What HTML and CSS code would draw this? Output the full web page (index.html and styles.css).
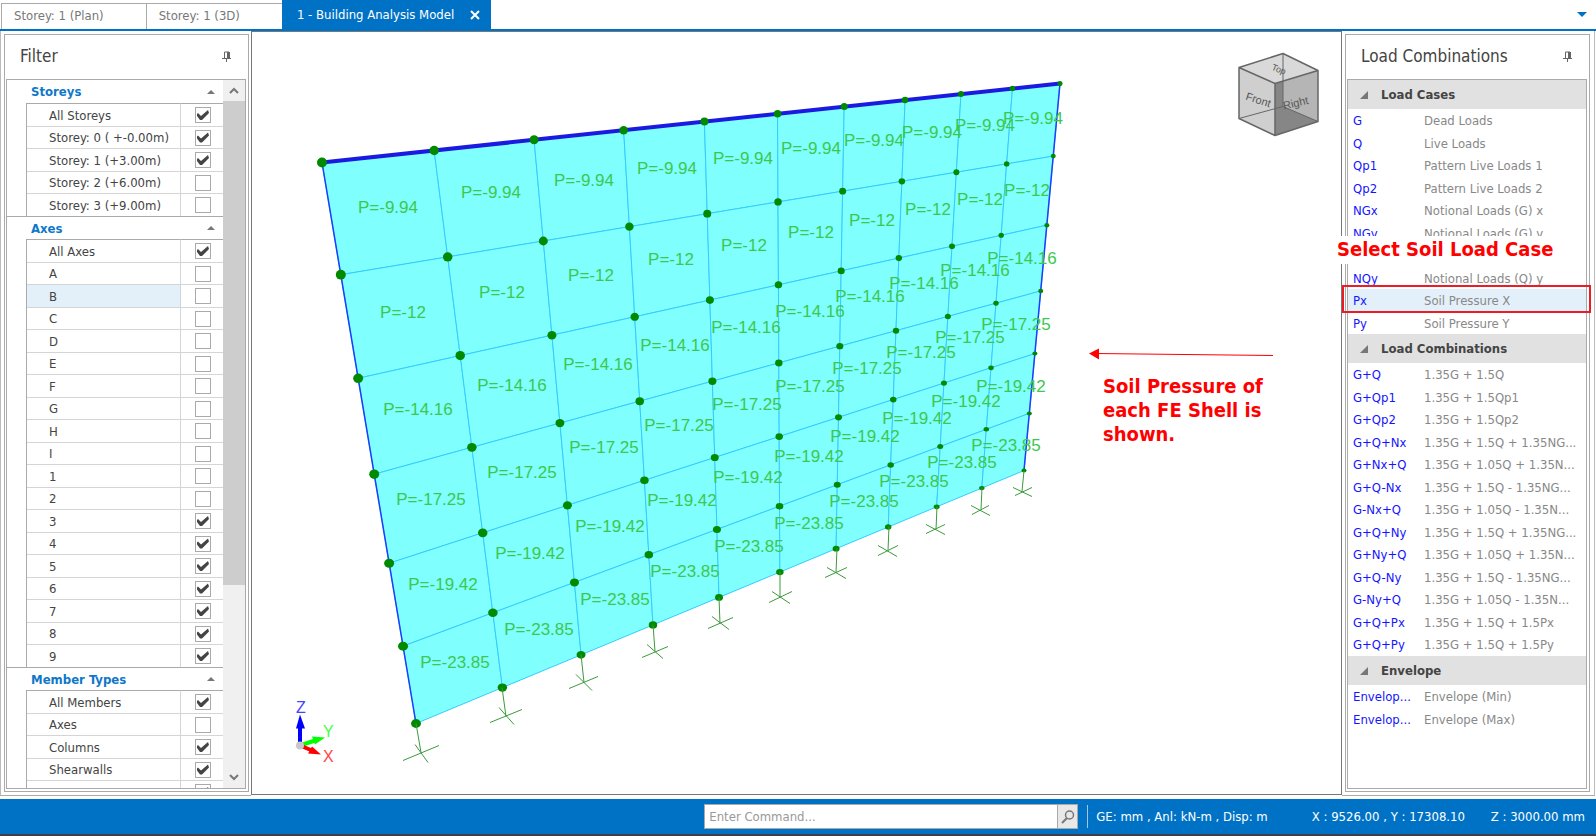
FILE: index.html
```html
<!DOCTYPE html>
<html lang="en">
<head>
    <meta charset="UTF-8">
    <title>Building Analysis Model</title>
    <link rel="stylesheet" href="styles.css">
</head>
<body>

<nav class="tabs">
    <a class="tab" href="#plan">Storey: 1 (Plan)</a>
    <a class="tab" href="#view3d">Storey: 1 (3D)</a>
    <div class="tab active">
        <a href="#model">1 - Building Analysis Model</a>
        <button class="close" aria-label="Close">
            <svg width="10" height="10" viewBox="0 0 10 10"><path d="M1 1L9 9M9 1L1 9" stroke="#fff" stroke-width="2"/></svg>
        </button>
    </div>
    <button class="tablist" aria-label="Open tabs">
        <svg width="10" height="5" viewBox="0 0 10 5"><path d="M0 0H10L5 5Z" fill="#0072c6"/></svg>
    </button>
</nav>

<main class="work">

    <aside class="side">
        <div class="panel">
            <div class="panelhead">
                <h2>Filter</h2>
                <button class="pin" aria-label="Pin">
                    <svg width="10" height="11" viewBox="0 0 10 11"><path d="M2.5 7V1H7V7M0 7.5H9M4.5 8V11" fill="none" stroke="#666"/><path d="M5 1H8V7H5Z" fill="#666"/></svg>
                </button>
            </div>
            <div class="list filter">
                <div class="groups">
                    <button class="group">Storeys</button>
                    <table class="checks">
                        <tr><td><label for="s0">All Storeys</label></td><td><input type="checkbox" id="s0" checked></td></tr>
                        <tr><td><label for="s1">Storey: 0 ( +-0.00m)</label></td><td><input type="checkbox" id="s1" checked></td></tr>
                        <tr><td><label for="s2">Storey: 1 (+3.00m)</label></td><td><input type="checkbox" id="s2" checked></td></tr>
                        <tr><td><label for="s3">Storey: 2 (+6.00m)</label></td><td><input type="checkbox" id="s3"></td></tr>
                        <tr><td><label for="s4">Storey: 3 (+9.00m)</label></td><td><input type="checkbox" id="s4"></td></tr>
                    </table>
                    <button class="group">Axes</button>
                    <table class="checks">
                        <tr><td><label for="a0">All Axes</label></td><td><input type="checkbox" id="a0" checked></td></tr>
                        <tr><td><label for="aA">A</label></td><td><input type="checkbox" id="aA"></td></tr>
                        <tr><td class="current"><label for="aB">B</label></td><td><input type="checkbox" id="aB"></td></tr>
                        <tr><td><label for="aC">C</label></td><td><input type="checkbox" id="aC"></td></tr>
                        <tr><td><label for="aD">D</label></td><td><input type="checkbox" id="aD"></td></tr>
                        <tr><td><label for="aE">E</label></td><td><input type="checkbox" id="aE"></td></tr>
                        <tr><td><label for="aF">F</label></td><td><input type="checkbox" id="aF"></td></tr>
                        <tr><td><label for="aG">G</label></td><td><input type="checkbox" id="aG"></td></tr>
                        <tr><td><label for="aH">H</label></td><td><input type="checkbox" id="aH"></td></tr>
                        <tr><td><label for="aI">I</label></td><td><input type="checkbox" id="aI"></td></tr>
                        <tr><td><label for="a1">1</label></td><td><input type="checkbox" id="a1"></td></tr>
                        <tr><td><label for="a2">2</label></td><td><input type="checkbox" id="a2"></td></tr>
                        <tr><td><label for="a3">3</label></td><td><input type="checkbox" id="a3" checked></td></tr>
                        <tr><td><label for="a4">4</label></td><td><input type="checkbox" id="a4" checked></td></tr>
                        <tr><td><label for="a5">5</label></td><td><input type="checkbox" id="a5" checked></td></tr>
                        <tr><td><label for="a6">6</label></td><td><input type="checkbox" id="a6" checked></td></tr>
                        <tr><td><label for="a7">7</label></td><td><input type="checkbox" id="a7" checked></td></tr>
                        <tr><td><label for="a8">8</label></td><td><input type="checkbox" id="a8" checked></td></tr>
                        <tr><td><label for="a9">9</label></td><td><input type="checkbox" id="a9" checked></td></tr>
                    </table>
                    <button class="group">Member Types</button>
                    <table class="checks">
                        <tr><td><label for="m0">All Members</label></td><td><input type="checkbox" id="m0" checked></td></tr>
                        <tr><td><label for="m1">Axes</label></td><td><input type="checkbox" id="m1"></td></tr>
                        <tr><td><label for="m2">Columns</label></td><td><input type="checkbox" id="m2" checked></td></tr>
                        <tr><td><label for="m3">Shearwalls</label></td><td><input type="checkbox" id="m3" checked></td></tr>
                        <tr><td><label for="m4">Beams</label></td><td><input type="checkbox" id="m4" checked></td></tr>
                    </table>
                </div>
                <div class="scroll">
                    <button aria-label="Scroll up"><svg width="10" height="7" viewBox="0 0 10 7"><path d="M1 6L5 2L9 6" fill="none" stroke="#777" stroke-width="2"/></svg></button>
                    <div class="thumb"></div>
                    <div class="track"></div>
                    <button aria-label="Scroll down"><svg width="10" height="7" viewBox="0 0 10 7"><path d="M1 1L5 5L9 1" fill="none" stroke="#777" stroke-width="2"/></svg></button>
                </div>
            </div>
        </div>
    </aside>

    <section class="view">
        <svg id="model" viewBox="252 33 1089 761">
            <g id="shells"></g>
            <g id="nodes"></g>
            <!-- supports under the wall -->
            <path class="support" d="M416 724L421 753M403 761L439 746M415 745L428 763
                M502 688L506 717M490 723L522 710M499 708L514 725
                M581 655L584 683M569 689L598 677M576 675L592 691
                M653 625L655 652M642 658L668 647M647 645L663 659
                M719 598L720 624M708 629L733 618M712 617L729 630
                M780 572V598M769 603L792 592M772 592L790 604
                M837 549L836 573M825 578L847 568M827 568L846 579
                M889 527L888 551M878 556L898 546M878 546L897 557
                M937 507L936 530M926 534L945 525M926 525L945 535
                M982 488L981 510M972 515L989 506M971 506L990 516
                M1024 471L1022 492M1015 496L1032 488M1013 488L1032 497"/>
            <g id="loads"></g>

            <!-- view cube -->
            <g class="cube">
                <path fill="#d9d9d9" d="M1239 68L1283 54L1318 71L1275 84Z"/>
                <path fill="#cfcfcf" d="M1239 68L1275 84V136L1239 119Z"/>
                <path fill="#b5b5b5" d="M1275 84L1318 71V122L1275 136Z"/>
                <path fill="#868686" d="M1275 84L1283 82V107L1318 122L1275 136Z"/>
                <path class="hidden" d="M1283 54V107L1239 119M1283 107L1318 122"/>
                <path class="edge" d="M1239 68L1283 54L1318 71V122L1275 136L1239 119ZM1239 68L1275 84L1318 71M1275 84V136"/>
                <text transform="translate(1245 100) rotate(18)">Front</text>
                <text transform="translate(1284 110) rotate(-13)">Right</text>
                <text class="top" transform="translate(1271 70) rotate(22)">Top</text>
            </g>

            <!-- axis triad -->
            <g class="triad">
                <path stroke="#0000ff" d="M300 746V727"/><path fill="#0000ff" d="M300 715L296 729H305Z"/>
                <path stroke="#00ff00" d="M300 746L315 741"/><path fill="#00ff00" d="M325 738L312 737L315 745Z"/>
                <path stroke="#ff0000" d="M300 746L312 751"/><path fill="#ff0000" d="M321 755L312 747L308 754Z"/>
                <circle cx="300" cy="746" r="4" fill="#c8c8c8"/>
                <text x="296" y="713" fill="#4444ff">Z</text>
                <text x="323" y="737" fill="#44ff44">Y</text>
                <text x="323" y="762" fill="#ff4444">X</text>
            </g>

            <g class="note">
                <path d="M1096 354L1273 356" stroke="#f00"/>
                <path d="M1089 354L1099 349V360Z"/>
                <text x="1103" y="393">Soil Pressure of</text>
                <text x="1103" y="417">each FE Shell is</text>
                <text x="1103" y="441">shown.</text>
            </g>
        </svg>
    </section>

    <aside class="side right">
        <div class="panel">
            <div class="panelhead">
                <h2>Load Combinations</h2>
                <button class="pin" aria-label="Pin">
                    <svg width="10" height="11" viewBox="0 0 10 11"><path d="M2.5 7V1H7V7M0 7.5H9M4.5 8V11" fill="none" stroke="#666"/><path d="M5 1H8V7H5Z" fill="#666"/></svg>
                </button>
            </div>
            <div class="list">
                <button class="band">Load Cases</button>
                <table class="cases">
                    <tr><td>G</td><td>Dead Loads</td></tr>
                    <tr><td>Q</td><td>Live Loads</td></tr>
                    <tr><td>Qp1</td><td>Pattern Live Loads 1</td></tr>
                    <tr><td>Qp2</td><td>Pattern Live Loads 2</td></tr>
                    <tr><td>NGx</td><td>Notional Loads (G) x</td></tr>
                    <tr><td>NGy</td><td>Notional Loads (G) y</td></tr>
                    <tr><td></td><td></td></tr>
                    <tr><td>NQy</td><td>Notional Loads (Q) y</td></tr>
                    <tr class="current"><td>Px</td><td>Soil Pressure X</td></tr>
                    <tr><td>Py</td><td>Soil Pressure Y</td></tr>
                </table>
                <button class="band">Load Combinations</button>
                <table class="cases">
                    <tr><td>G+Q</td><td>1.35G + 1.5Q</td></tr>
                    <tr><td>G+Qp1</td><td>1.35G + 1.5Qp1</td></tr>
                    <tr><td>G+Qp2</td><td>1.35G + 1.5Qp2</td></tr>
                    <tr><td>G+Q+Nx</td><td>1.35G + 1.5Q + 1.35NG...</td></tr>
                    <tr><td>G+Nx+Q</td><td>1.35G + 1.05Q + 1.35N...</td></tr>
                    <tr><td>G+Q-Nx</td><td>1.35G + 1.5Q - 1.35NG...</td></tr>
                    <tr><td>G-Nx+Q</td><td>1.35G + 1.05Q - 1.35N...</td></tr>
                    <tr><td>G+Q+Ny</td><td>1.35G + 1.5Q + 1.35NG...</td></tr>
                    <tr><td>G+Ny+Q</td><td>1.35G + 1.05Q + 1.35N...</td></tr>
                    <tr><td>G+Q-Ny</td><td>1.35G + 1.5Q - 1.35NG...</td></tr>
                    <tr><td>G-Ny+Q</td><td>1.35G + 1.05Q - 1.35N...</td></tr>
                    <tr><td>G+Q+Px</td><td>1.35G + 1.5Q + 1.5Px</td></tr>
                    <tr><td>G+Q+Py</td><td>1.35G + 1.5Q + 1.5Py</td></tr>
                </table>
                <button class="band">Envelope</button>
                <table class="cases">
                    <tr><td>Envelop...</td><td>Envelope (Min)</td></tr>
                    <tr><td>Envelop...</td><td>Envelope (Max)</td></tr>
                </table>
            </div>
        </div>
        <p class="callout">Select Soil Load Case</p>
        <div class="frame"></div>
    </aside>

</main>

<footer class="status">
    <form class="command">
        <input type="text" aria-label="Command" placeholder="Enter Command...">
        <button type="button" aria-label="Search">
            <svg width="14" height="14" viewBox="0 0 14 14"><circle cx="8.5" cy="5" r="4" fill="none" stroke="#777" stroke-width="1.5"/><path d="M6 8L1 13" stroke="#777" stroke-width="2"/></svg>
        </button>
    </form>
    <span class="units">GE: mm , Anl: kN-m , Disp: m</span>
    <span class="xy">X : 9526.00 , Y : 17308.10</span>
    <span>Z : 3000.00 mm</span>
</footer>

<script src="script.js"></script>
</body>
</html>
```
FILE: styles.css
```css
*{
    box-sizing: border-box;
}

body{
    margin: 0;
    height: 100vh;
    display: flex;
    flex-direction: column;
    background-color: #fff;
    color: #444;
    font-family: "DejaVu Sans Condensed", "DejaVu Sans", sans-serif;
    font-size: 13px;
}

button{
    border: none;
    padding: 0;
    background: none;
    font: inherit;
    color: inherit;
}

a{
    color: inherit;
    text-decoration: none;
}

svg{
    display: block;
}

/* tabs */
.tabs{
    display: flex;
    align-items: flex-end;
    height: 31px;
    flex: none;
    padding-left: 1px;
    border-bottom: 2px solid #0072c6;
}

.tab{
    height: 26px;
    padding: 0 42px 0 12px;
    line-height: 24px;
    border: 1px solid #aaa;
    border-bottom: none;
    color: #777;
}
.tab + .tab{
    border-left: none;
    border-right: none;
}

.tab.active{
    display: flex;
    align-items: center;
    gap: 16px;
    height: 29px;
    padding: 0 11px 0 15px;
    line-height: 29px;
    border: none;
    background-color: #0072c6;
    color: #fff;
}

.tablist{
    margin-left: auto;
    padding: 0 9px 12px 0;
}

/* panels */
.work{
    flex: 1;
    min-height: 0;
    display: flex;
}

.side{
    position: relative;
    width: 251px;
    flex: none;
    padding: 3px 2px 3px 3px;
    border-left: 1px solid #bbb;
    border-bottom: 1px solid #aaa;
}
.side.right{
    width: 253px;
    margin-right: 1px;
    padding: 3px 4px 3px 3px;
    border-left: none;
    border-right: 1px solid #bbb;
}

.panel{
    height: 100%;
    display: flex;
    flex-direction: column;
    padding: 0 2px 2px 1px;
    border: 1px solid #aaa;
}

.panelhead{
    display: flex;
    justify-content: space-between;
    align-items: center;
    height: 44px;
    flex: none;
    padding: 0 14px 2px 14px;
}

h2{
    margin: 0;
    font-size: 17px;
    font-weight: normal;
}

.list{
    flex: 1;
    min-height: 0;
    overflow: hidden;
    border: 1px solid #aaa;
}

table{
    border-collapse: separate;
    border-spacing: 0;
    table-layout: fixed;
}
td{
    padding: 0;
    white-space: nowrap;
    overflow: hidden;
}
tr{
    height: 22px;
}
tr:nth-child(odd){
    height: 23px;
}

.filter{
    display: flex;
}
.groups{
    flex: 1;
    min-width: 0;
}

.group{
    display: flex;
    justify-content: space-between;
    align-items: center;
    width: 100%;
    height: 23px;
    padding: 0 8px 0 24px;
    border-top: 1px solid #aaa;
    color: #0f78c8;
    font-weight: bold;
}
.group:first-child{
    border-top: none;
}
.group::after{
    content: "";
    border: 4px solid transparent;
    border-top: none;
    border-bottom: 4px solid #777;
}

.checks{
    width: calc(100% - 19px);
    margin-left: 19px;
    border-left: 1px solid #aaa;
}
.checks td{
    border-top: 1px solid #d5d5d5;
    padding-left: 22px;
}
.checks tr:first-child td{
    border-top-color: #aaa;
}
.checks td + td{
    width: 43px;
    padding: 0 0 0 14px;
    border-left: 1px solid #d5d5d5;
}
.checks .current{
    background-color: #e3f0fa;
}

input[type="checkbox"]{
    display: block;
    appearance: none;
    width: 16px;
    height: 16px;
    margin: 0;
    border: 1px solid #aaa;
    background-color: #fff;
}
/* tick mark */
input[type="checkbox"]:checked::after{
    content: "";
    display: block;
    width: 12px;
    height: 12px;
    margin: 1px;
    background-color: #444;
    clip-path: polygon(0 5px, 1px 4px, 4px 7px, 11px 1px, 12px 4px, 5px 11px, 3px 11px, 0 7px);
}

.scroll{
    display: flex;
    flex-direction: column;
    width: 22px;
    background-color: #f0f0f0;
}
.scroll button{
    display: flex;
    align-items: center;
    justify-content: center;
    height: 21px;
}
.thumb{
    flex: 484;
    background-color: #cdcdcd;
}
.track{
    flex: 182;
}

.band{
    display: flex;
    align-items: center;
    gap: 13px;
    width: 100%;
    height: 29px;
    padding-left: 12px;
    background-color: #e1e1e1;
    font-weight: bold;
}
.band::before{
    content: "";
    border-left: 8px solid transparent;
    border-bottom: 8px solid #777;
}

.cases{
    width: 100%;
    color: #888;
}
.cases td:first-child{
    width: 76px;
    padding-left: 5px;
    color: #1414ff;
}
.cases .current{
    background-color: #e3f0fa;
}

/* red notes over the load list */
.callout{
    position: absolute;
    top: 205px;
    left: -5px;
    margin: 0;
    padding-bottom: 2px;
    background-color: #fff;
    color: #f00;
    font-size: 20px;
    font-weight: bold;
    line-height: 26px;
    white-space: nowrap;
}
.frame{
    position: absolute;
    top: 254px;
    left: 0;
    right: 3px;
    height: 28px;
    border: 2px solid #ed1c24;
}

/* model view */
.view{
    flex: 1;
    min-width: 0;
    margin-bottom: 1px;
    border: 1px solid #777;
}
#model{
    width: 100%;
    height: 100%;
}
.shell{
    fill: #80ffff;
    stroke: #33ccff;
}
.beam{
    stroke: #1a1ae0;
    stroke-width: 4;
}
.wall{
    stroke: #1a40ff;
    stroke-width: 1.5;
}
#nodes{
    fill: #008a00;
}
#loads{
    fill: #3cc84e;
    font-family: "Liberation Sans", Arial, sans-serif;
    font-size: 17px;
    text-anchor: middle;
}
.support{
    fill: none;
    stroke: #3c9a3c;
}
.cube .edge{
    fill: none;
    stroke: #666;
    stroke-width: 1.5;
    stroke-linejoin: round;
}
.cube .hidden{
    fill: none;
    stroke: #666;
}
.cube text{
    fill: #555;
    font-family: "Liberation Sans", Arial, sans-serif;
    font-size: 11px;
}
.cube .top{
    font-size: 9px;
}
.triad{
    stroke-width: 4;
    font-family: "Liberation Sans", Arial, sans-serif;
    font-size: 16px;
}
.triad text{
    stroke: none;
}
.note{
    fill: #f00;
    font-size: 20px;
    font-weight: bold;
}

/* status bar */
.status{
    display: flex;
    align-items: center;
    justify-content: flex-end;
    flex: none;
    height: 37px;
    margin-top: 3px;
    padding-right: 11px;
    border-bottom: 2px solid #3c4046;
    background-color: #0072c6;
    color: #fff;
}
.command{
    display: flex;
    width: 374px;
    height: 25px;
    border: 1px solid #aaa;
    background-color: #fff;
}
.command input{
    flex: 1;
    min-width: 0;
    padding: 0 4px;
    border: none;
    background: none;
    font: inherit;
}
.command input::placeholder{
    color: #999;
}
.command button{
    display: flex;
    align-items: center;
    justify-content: center;
    width: 20px;
    border-left: 1px solid #aaa;
    background-color: #e8e8e8;
}
.units{
    margin-left: 9px;
    padding-left: 8px;
    border-left: 1px solid #9cc8ea;
    line-height: 23px;
}
.xy{
    min-width: 161px;
    margin: 0 18px 0 44px;
}
```
FILE: script.js
```js
// wall corners on the view: top left, top right, bottom right, bottom left
const corners = [[322, 163], [1060, 84], [1024, 471], [416, 724]];
const pressures = ["-9.94", "-12", "-14.16", "-17.25", "-19.42", "-23.85"];
const cols = 10;
const rows = pressures.length;

// perspective mapping of the unit square onto the corners
const [[x0, y0], [x1, y1], [x2, y2], [x3, y3]] = corners;
const dx1 = x1 - x2, dx2 = x3 - x2, sx = x0 - x1 + x2 - x3;
const dy1 = y1 - y2, dy2 = y3 - y2, sy = y0 - y1 + y2 - y3;
const det = dx1 * dy2 - dx2 * dy1;
const g = (sx * dy2 - dx2 * sy) / det;
const h = (dx1 * sy - sx * dy1) / det;

function point(col, row) {
    const u = col / cols;
    const v = row / rows;
    const w = g * u + h * v + 1;
    return [
        ((x1 - x0 + g * x1) * u + (x3 - x0 + h * x3) * v + x0) / w,
        ((y1 - y0 + g * y1) * u + (y3 - y0 + h * y3) * v + y0) / w
    ];
}

let shells = "";
let nodes = "";
let loads = "";

for (let r = 0; r < rows; r++) {
    for (let c = 0; c < cols; c++) {
        const quad = [point(c, r), point(c + 1, r), point(c + 1, r + 1), point(c, r + 1)];
        const [x, y] = point(c + 0.5, r + 0.5);
        shells += `<polygon class="shell" points="${quad.join(" ")}"/>`;
        loads += `<text x="${Math.round(x)}" y="${Math.round(y)}">P=${pressures[r]}</text>`;
    }
}

shells += `<path class="wall" d="M${corners[0]}L${corners[3]}M${corners[1]}L${corners[2]}"/>`;
shells += `<path class="beam" d="M${corners[0]}L${corners[1]}"/>`;

for (let r = 0; r <= rows; r++) {
    for (let c = 0; c <= cols; c++) {
        const [x, y] = point(c, r);
        const size = 5 - c * 0.25;
        nodes += `<ellipse cx="${x}" cy="${y}" rx="${size}" ry="${size - r * 0.1}"/>`;
    }
}

document.querySelector("#shells").innerHTML = shells;
document.querySelector("#nodes").innerHTML = nodes;
document.querySelector("#loads").innerHTML = loads;
```
